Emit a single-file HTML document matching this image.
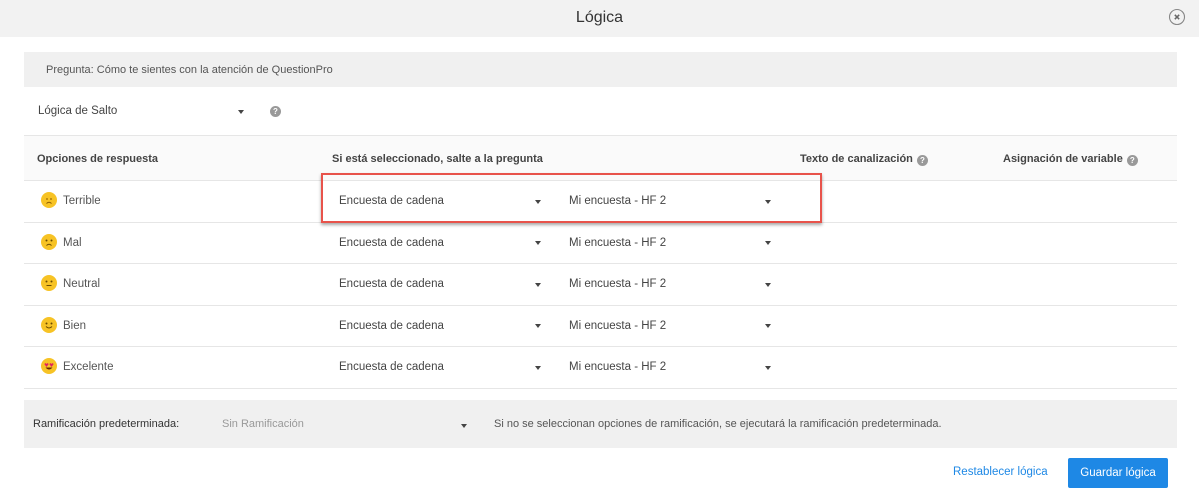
<!DOCTYPE html>
<html><head><meta charset="utf-8"><style>
*{margin:0;padding:0;box-sizing:border-box}
body{width:1199px;height:500px;background:#fff;font-family:"Liberation Sans",sans-serif;color:#555;position:relative;overflow:hidden;font-size:11.5px}
.a{position:absolute;white-space:nowrap}
.hdr{left:0;top:0;width:1199px;height:37px;background:#f2f2f2}
.line{position:absolute;left:24px;width:1153px;height:1px;background:#e6e6e6}
.b{font-weight:bold;color:#444;font-size:11px}
.car{position:absolute;width:0;height:0;border-left:3.5px solid transparent;border-right:3.5px solid transparent;border-top:4px solid #444}
.q{position:absolute;width:11px;height:11px;border-radius:50%;background:#999;color:#fff;font-size:8px;font-weight:bold;text-align:center;line-height:11px}
.qi{display:inline-block;width:11px;height:11px;border-radius:50%;background:#999;color:#fff;font-size:8px;font-weight:bold;text-align:center;line-height:11px;vertical-align:-1px;margin-left:4px}
.em{position:absolute;width:16px;height:16px;border-radius:50%;background:#f7c325}
.t{top:0}
</style></head><body>
<div class="a hdr"></div>
<div class="a" style="left:0;width:1199px;top:9px;text-align:center;font-size:16px;color:#333">Lógica</div>
<svg class="a" style="left:1168px;top:8px" width="18" height="18" viewBox="0 0 18 18"><circle cx="9" cy="9" r="7.5" fill="none" stroke="#888" stroke-width="1.1"/><path d="M6.8 6.8L11.2 11.2M11.2 6.8L6.8 11.2" stroke="#666" stroke-width="1.5"/></svg>

<div class="a" style="left:24px;top:52px;width:1153px;height:35px;background:#f0f0f0"></div>
<div class="a" style="left:46px;top:64px;font-size:11px;color:#555">Pregunta: Cómo te sientes con la atención de QuestionPro</div>

<div class="a" style="left:38px;top:105px;color:#444">Lógica de Salto</div>
<div class="car" style="left:238px;top:110px"></div>
<div class="q" style="left:270px;top:106px">?</div>

<div class="line" style="top:135px"></div>
<div class="a" style="left:24px;top:136px;width:1153px;height:44px;background:#fafafa"></div>
<div class="a b" style="left:37px;top:153px">Opciones de respuesta</div>
<div class="a b" style="left:332px;top:153px">Si está seleccionado, salte a la pregunta</div>
<div class="a b" style="left:800px;top:153px">Texto de canalización<span class="qi">?</span></div>
<div class="a b" style="left:1003px;top:153px">Asignación de variable<span class="qi">?</span></div>

<div class="line" style="top:180px"></div>
<div class="line" style="top:222px"></div>
<div class="line" style="top:263px"></div>
<div class="line" style="top:305px"></div>
<div class="line" style="top:346px"></div>
<div class="line" style="top:388px"></div>

<div class="em" style="left:41px;top:192px"></div>
<svg class="a" style="left:41px;top:192px" width="16" height="16"><path d="M5 7l2 0M9 7l2 0M5.5 11.5q2.5-2.5 5 0" stroke="#8a5a00" stroke-width="1" fill="none"/></svg>
<div class="a" style="left:63px;top:195px">Terrible</div>
<div class="em" style="left:41px;top:234px"></div>
<svg class="a" style="left:41px;top:234px" width="16" height="16"><circle cx="5.5" cy="6.5" r="1" fill="#6b4a00"/><circle cx="10.5" cy="6.5" r="1" fill="#6b4a00"/><path d="M5.5 11.5q2.5-2.5 5 0" stroke="#6b4a00" stroke-width="1" fill="none"/></svg>
<div class="a" style="left:63px;top:237px">Mal</div>
<div class="em" style="left:41px;top:275px"></div>
<svg class="a" style="left:41px;top:275px" width="16" height="16"><circle cx="5.5" cy="6.5" r="1" fill="#6b4a00"/><circle cx="10.5" cy="6.5" r="1" fill="#6b4a00"/><path d="M5.5 10.5h5" stroke="#6b4a00" stroke-width="1"/></svg>
<div class="a" style="left:63px;top:278px">Neutral</div>
<div class="em" style="left:41px;top:317px"></div>
<svg class="a" style="left:41px;top:317px" width="16" height="16"><circle cx="5.5" cy="6.5" r="1" fill="#6b4a00"/><circle cx="10.5" cy="6.5" r="1" fill="#6b4a00"/><path d="M5 9.5q3 3 6 0" stroke="#6b4a00" stroke-width="1" fill="none"/></svg>
<div class="a" style="left:63px;top:320px">Bien</div>
<div class="em" style="left:41px;top:358px"></div>
<svg class="a" style="left:41px;top:358px" width="16" height="16"><path d="M4 5.5l1.5 2l1.5-2M9 5.5l1.5 2l1.5-2" stroke="#e0245e" stroke-width="1.8" fill="none"/><path d="M4.5 9.5q3.5 4 7 0z" fill="#6b2a00"/></svg>
<div class="a" style="left:63px;top:361px">Excelente</div>

<div class="a" style="left:339px;top:195px;color:#444">Encuesta de cadena</div><div class="car" style="left:535px;top:200px"></div>
<div class="a" style="left:569px;top:195px;color:#444">Mi encuesta - HF 2</div><div class="car" style="left:765px;top:200px"></div>
<div class="a" style="left:339px;top:237px;color:#444">Encuesta de cadena</div><div class="car" style="left:535px;top:241px"></div>
<div class="a" style="left:569px;top:237px;color:#444">Mi encuesta - HF 2</div><div class="car" style="left:765px;top:241px"></div>
<div class="a" style="left:339px;top:278px;color:#444">Encuesta de cadena</div><div class="car" style="left:535px;top:283px"></div>
<div class="a" style="left:569px;top:278px;color:#444">Mi encuesta - HF 2</div><div class="car" style="left:765px;top:283px"></div>
<div class="a" style="left:339px;top:320px;color:#444">Encuesta de cadena</div><div class="car" style="left:535px;top:324px"></div>
<div class="a" style="left:569px;top:320px;color:#444">Mi encuesta - HF 2</div><div class="car" style="left:765px;top:324px"></div>
<div class="a" style="left:339px;top:361px;color:#444">Encuesta de cadena</div><div class="car" style="left:535px;top:366px"></div>
<div class="a" style="left:569px;top:361px;color:#444">Mi encuesta - HF 2</div><div class="car" style="left:765px;top:366px"></div>

<div class="a" style="left:321px;top:173px;width:501px;height:50px;border:2px solid #e8534b;box-shadow:0 2px 3px rgba(0,0,0,.35)"></div>

<div class="a" style="left:24px;top:400px;width:1153px;height:48px;background:#f0f0f0"></div>
<div class="a" style="left:33px;top:418px;font-size:11px;color:#333">Ramificación predeterminada:</div>
<div class="a" style="left:222px;top:418px;font-size:11px;color:#999">Sin Ramificación</div>
<div class="car" style="left:461px;top:424px"></div>
<div class="a" style="left:494px;top:418px;font-size:11px;color:#555">Si no se seleccionan opciones de ramificación, se ejecutará la ramificación predeterminada.</div>

<div class="a" style="left:953px;top:466px;font-size:11.5px;color:#1e88e5">Restablecer lógica</div>
<div class="a" style="left:1068px;top:458px;width:100px;height:30px;background:#1e88e5;border-radius:2px;color:#fff;font-size:11.5px;text-align:center;line-height:30px">Guardar lógica</div>
</body></html>
